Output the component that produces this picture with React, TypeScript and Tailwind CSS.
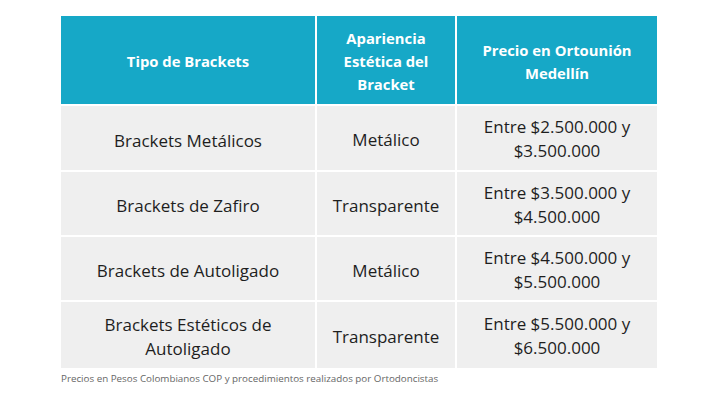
import React from "react";

const rows = [
  ["Brackets Metálicos", "Metálico", "Entre $2.500.000 y", "$3.500.000"],
  ["Brackets de Zafiro", "Transparente", "Entre $3.500.000 y", "$4.500.000"],
  ["Brackets de Autoligado", "Metálico", "Entre $4.500.000 y", "$5.500.000"],
  ["Brackets Estéticos de\nAutoligado", "Transparente", "Entre $5.500.000 y", "$6.500.000"],
];
const heights = ["h-[64px]", "h-[63px]", "h-[63px]", "h-[66px]"];

export default function App() {
  return (
    <div
      className="w-[720px] h-[404px] bg-white pt-[16px] pl-[61px]"
      style={{ fontFamily: '"Open Sans", "Liberation Sans", sans-serif' }}
    >
      <div className="grid grid-cols-[254px_138px_200px] gap-[2px] w-[596px]">
        <div className="h-[88px] pt-[3px] bg-[#16a8c7] flex items-center justify-center text-white font-bold text-[14.8px] leading-[23px] text-center">
          Tipo de Brackets
        </div>
        <div className="h-[88px] pt-[3px] bg-[#16a8c7] flex items-center justify-center text-white font-bold text-[14.8px] leading-[23px] text-center">
          Apariencia<br />Estética del<br />Bracket
        </div>
        <div className="h-[88px] pt-[3px] bg-[#16a8c7] flex items-center justify-center text-white font-bold text-[14.8px] leading-[23px] text-center">
          Precio en Ortounión<br />Medellín
        </div>
        {rows.map((r, i) => (
          <React.Fragment key={i}>
            <div className={`${heights[i]} ${i === 3 ? "pt-[3px]" : "pt-[5px]"} bg-[#efefef] flex items-center justify-center text-[#1e1e1e] text-[17px] leading-[24px] text-center whitespace-pre-line`}>
              {r[0]}
            </div>
            <div className={`${heights[i]} pt-[4px] bg-[#efefef] flex items-center justify-center text-[#1e1e1e] text-[17px] leading-[24px] text-center`}>
              {r[1]}
            </div>
            <div className={`${heights[i]} pt-[2px] bg-[#efefef] flex flex-col items-center justify-center text-[#1e1e1e] text-[17px] leading-[24px] text-center`}>
              <span>{r[2]}</span>
              <span>{r[3]}</span>
            </div>
          </React.Fragment>
        ))}
      </div>
      <div className="mt-[5px] text-[9.8px] text-[#666] leading-[12px]">
        Precios en Pesos Colombianos COP y procedimientos realizados por Ortodoncistas
      </div>
    </div>
  );
}
